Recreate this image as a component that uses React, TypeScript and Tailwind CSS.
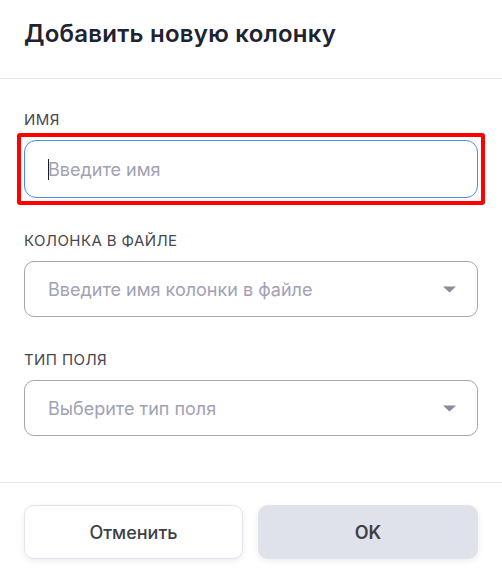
const fieldFont = { fontFamily: 'Inter, "Noto Sans", sans-serif' };

function Label({ children }: { children: string }) {
  return (
    <div className="h-5 text-[15px] leading-5 uppercase tracking-[0.027em] text-[#47474f] mb-[10px]">
      {children}
    </div>
  );
}

function SelectField({ placeholder }: { placeholder: string }) {
  return (
    <div className="h-14 w-full rounded-[10px] border border-[#a5a5b6] flex items-center justify-between pl-[23px] pr-[21px]">
      <span className="text-[18px] text-[#a2a1b4]">{placeholder}</span>
      <svg width="13" height="7" viewBox="0 0 13 7" className="text-[#8b8a9c]">
        <path d="M0 0.5h13L6.5 6.5z" fill="currentColor" />
      </svg>
    </div>
  );
}

export default function App() {
  return (
    <div className="w-[502px] h-[576px] bg-white flex flex-col" style={fieldFont}>
      {/* Header */}
      <div className="h-[79px] border-b border-[#e3e3ea] px-6 pt-[18px] shrink-0">
        <h1 className="text-[24px] leading-8 font-semibold tracking-[0.01em] text-[#1d2330]">
          Добавить новую колонку
        </h1>
      </div>

      {/* Body */}
      <div className="flex-1 px-6 pt-[31px]">
        <Label>Имя</Label>
        <div className="relative">
          <div className="absolute -inset-[7px] border-4 border-[#ff0000] rounded-[3px] pointer-events-none" />
          <div className="h-[58px] w-full rounded-[12px] border border-[#4a8ef0] flex items-center pl-[23px] relative">
            <span className="absolute left-[23px] top-[18px] w-px h-[21px] bg-[#1b1f2a]" />
            <span className="text-[18px] text-[#a2a1b4]">Введите имя</span>
          </div>
        </div>

        <div className="mt-[33px]">
          <Label>Колонка в файле</Label>
          <SelectField placeholder="Введите имя колонки в файле" />
        </div>

        <div className="mt-[33px]">
          <Label>Тип поля</Label>
          <SelectField placeholder="Выберите тип поля" />
        </div>
      </div>

      {/* Footer */}
      <div className="h-[94px] border-t border-[#e3e3ea] px-6 pt-[22px] flex gap-[15px] shrink-0">
        <button
          type="button"
          className="h-[54px] w-[219px] rounded-[10px] border border-[#e4e4ec] bg-white shadow-[0_2px_6px_rgba(30,30,60,0.08)] text-[18px] font-medium text-[#3f3f46]"
        >
          Отменить
        </button>
        <button
          type="button"
          className="h-[54px] flex-1 rounded-[10px] bg-[#dfe2ea] shadow-[0_2px_6px_rgba(30,30,60,0.08)] text-[18px] font-semibold text-[#3f3f46]"
        >
          OK
        </button>
      </div>
    </div>
  );
}
